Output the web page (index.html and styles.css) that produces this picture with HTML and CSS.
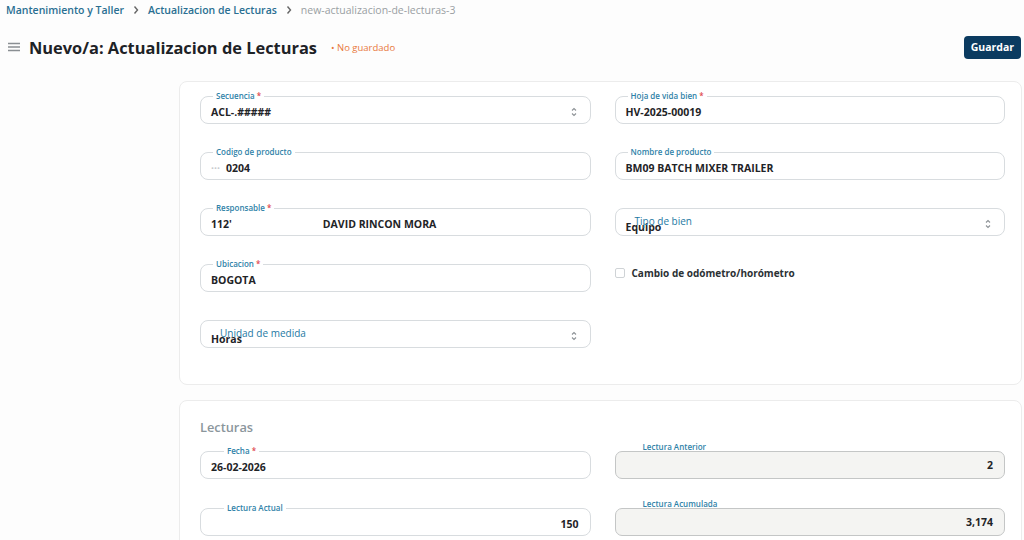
FILE: index.html
```html
<!DOCTYPE html>
<html lang="es">
    <head>
        <meta charset="UTF-8" />
        <meta name="viewport" content="width=device-width, initial-scale=1.0" />
        <title>Nuevo/a: Actualizacion de Lecturas</title>
        <link rel="stylesheet" href="styles.css">
    </head>
    <body>
        <nav class="breadcrumb">
            <a href="#">Mantenimiento y Taller</a>
            <svg class="crumb-sep" viewBox="0 0 6 10" width="6" height="10"><path d="M1.5 1.5 L4.5 5 L1.5 8.5" /></svg>
            <a href="#">Actualizacion de Lecturas</a>
            <svg class="crumb-sep" viewBox="0 0 6 10" width="6" height="10"><path d="M1.5 1.5 L4.5 5 L1.5 8.5" /></svg>
            <span class="crumb-current">new-actualizacion-de-lecturas-3</span>
        </nav>

        <header class="page-head">
            <div class="page-title">
                <svg class="menu-icon" viewBox="0 0 12 10" width="12" height="10"><path d="M0 1.5 H12 M0 5 H12 M0 8.5 H12" /></svg>
                <h1>Nuevo/a: Actualizacion de Lecturas</h1>
                <span class="status">&bull; No guardado</span>
            </div>
            <button class="btn-primary">Guardar</button>
        </header>

        <main class="form">
            <section class="card card-main">
                <div class="field field-select">
                    <label>Secuencia <span class="req">*</span></label>
                    <span class="value">ACL-.#####</span>
                    <svg class="updown" viewBox="0 0 6 12" width="6" height="12"><path d="M1 4.5 L3 2.5 L5 4.5 M1 7.5 L3 9.5 L5 7.5" /></svg>
                </div>
                <div class="field">
                    <label>Hoja de vida bien <span class="req">*</span></label>
                    <span class="value">HV-2025-00019</span>
                </div>

                <div class="field">
                    <label>Codigo de producto</label>
                    <span class="value value-masked"><span class="mask">&middot;&middot;&middot;</span>0204</span>
                </div>
                <div class="field">
                    <label>Nombre de producto</label>
                    <span class="value">BM09 BATCH MIXER TRAILER</span>
                </div>

                <div class="field">
                    <label>Responsable <span class="req">*</span></label>
                    <span class="value">112'<span class="name">DAVID RINCON MORA</span></span>
                </div>
                <div class="field field-select field-inline">
                    <label>Tipo de bien</label>
                    <span class="value">Equipo</span>
                    <svg class="updown" viewBox="0 0 6 12" width="6" height="12"><path d="M1 4.5 L3 2.5 L5 4.5 M1 7.5 L3 9.5 L5 7.5" /></svg>
                </div>

                <div class="field">
                    <label>Ubicacion <span class="req">*</span></label>
                    <span class="value">BOGOTA</span>
                </div>
                <label class="check">
                    <span class="box"></span>
                    Cambio de odómetro/horómetro
                </label>

                <div class="field field-select field-inline">
                    <label>Unidad de medida</label>
                    <span class="value">Horas</span>
                    <svg class="updown" viewBox="0 0 6 12" width="6" height="12"><path d="M1 4.5 L3 2.5 L5 4.5 M1 7.5 L3 9.5 L5 7.5" /></svg>
                </div>
            </section>

            <section class="card card-readings">
                <h2>Lecturas</h2>
                <div class="field field-wide-notch">
                    <label>Fecha <span class="req">*</span></label>
                    <span class="value">26-02-2026</span>
                </div>
                <div class="field field-readonly">
                    <label>Lectura Anterior</label>
                    <span class="value num">2</span>
                </div>

                <div class="field field-wide-notch">
                    <label>Lectura Actual</label>
                    <span class="value num">150</span>
                </div>
                <div class="field field-readonly">
                    <label>Lectura Acumulada</label>
                    <span class="value num">3,174</span>
                </div>
            </section>
        </main>
    </body>
</html>
```

FILE: styles.css
```css
html {
    --accent: #2f82a8;
    --ink: #1f2427;
    --line: #d8dcdf;
}

* {
    box-sizing: border-box;
}

body {
    margin: 0;
    background-color: #fdfdfd;
    font-family: "Open Sans", "Noto Sans", sans-serif;
    color: var(--ink);
    overflow: hidden;
}

/* breadcrumb */

.breadcrumb {
    display: flex;
    align-items: center;
    gap: 9px;
    height: 19px;
    padding: 0 6px;
    font-size: 10.5px;
    font-weight: 600;
}

.breadcrumb a {
    color: #2a6f92;
    text-decoration: none;
}

.crumb-sep {
    fill: none;
    stroke: #666;
    stroke-width: 1.4;
}

.crumb-current {
    color: #9a9fa3;
    font-weight: 400;
}

/* header */

.page-head {
    display: flex;
    align-items: center;
    justify-content: space-between;
    height: 62px;
    padding: 17px 3px 23px 8px;
}

.page-title {
    display: flex;
    align-items: center;
}

.menu-icon {
    fill: none;
    stroke: #8a8f93;
    stroke-width: 1.4;
    margin-right: 9px;
}

h1 {
    margin: 0;
    font-size: 16.4px;
    font-weight: 700;
    color: #1d2226;
}

.status {
    margin-left: 14px;
    font-size: 9.5px;
    color: #e8783c;
}

.btn-primary {
    height: 23px;
    padding: 0 7px;
    border: none;
    border-radius: 4px;
    background-color: #0b3b60;
    color: #fff;
    font-family: inherit;
    font-size: 10.5px;
    font-weight: 700;
}

/* form */

.form {
    display: flex;
    flex-direction: column;
    gap: 15px;
    margin: 0 2px 0 179px;
}

.card {
    display: grid;
    grid-template-columns: 1fr 1fr;
    column-gap: 24px;
    background-color: #fff;
    border: 1px solid #ececec;
    border-radius: 8px;
}

.card-main {
    row-gap: 28px;
    padding: 14px 16px 36px 20px;
}

.card-readings {
    row-gap: 29px;
    padding: 17px 16px 20px 20px;
}

.card-readings h2 {
    grid-column: 1 / 3;
    margin: 0 0 -14px;
    font-size: 12.8px;
    font-weight: 600;
    color: #8b969c;
}

.field {
    position: relative;
    display: flex;
    align-items: center;
    height: 28px;
    padding: 4px 10px 0;
    border: 1px solid var(--line);
    border-radius: 8px;
    background-color: #fff;
}

/* floating label sits on the top border */
.field label {
    position: absolute;
    top: -6px;
    left: 12px;
    padding: 0 3px;
    background-color: #fff;
    font-size: 8px;
    font-weight: 600;
    line-height: 10px;
    color: var(--accent);
}

.req {
    color: #e0484f;
}

.value {
    font-size: 10.5px;
    font-weight: 700;
    color: var(--ink);
}

.value-masked .mask {
    margin-right: 6px;
    color: #c6c9cc;
}

.value .name {
    margin-left: 91px;
}

.field-select .updown {
    margin-left: auto;
    margin-right: 3px;
    fill: none;
    stroke: #8d9296;
    stroke-width: 1.1;
}

.field-inline {
    padding-top: 10px;
}

.field-inline label {
    top: 7px;
    left: 16px;
    background-color: transparent;
    font-size: 10px;
    font-weight: 500;
    color: #2579a3;
}

.field-inline .updown {
    margin-top: -6px;
}

.check {
    display: flex;
    align-items: center;
    align-self: start;
    gap: 7px;
    padding-top: 2px;
    font-size: 10px;
    font-weight: 700;
    color: #2b3134;
}

.check .box {
    width: 10px;
    height: 10px;
    border: 1px solid #cfd3d6;
    border-radius: 2px;
}

.field-wide-notch label {
    left: 23px;
}

.field-readonly {
    padding-top: 0;
    background-color: #f4f4f2;
    border: 1.5px solid #c4c6c6;
    border-radius: 7px;
}

.field-readonly label {
    top: -10px;
    left: 27px;
    background-color: transparent;
    padding: 0;
}

.num {
    margin-left: auto;
    margin-right: 1px;
}
```
